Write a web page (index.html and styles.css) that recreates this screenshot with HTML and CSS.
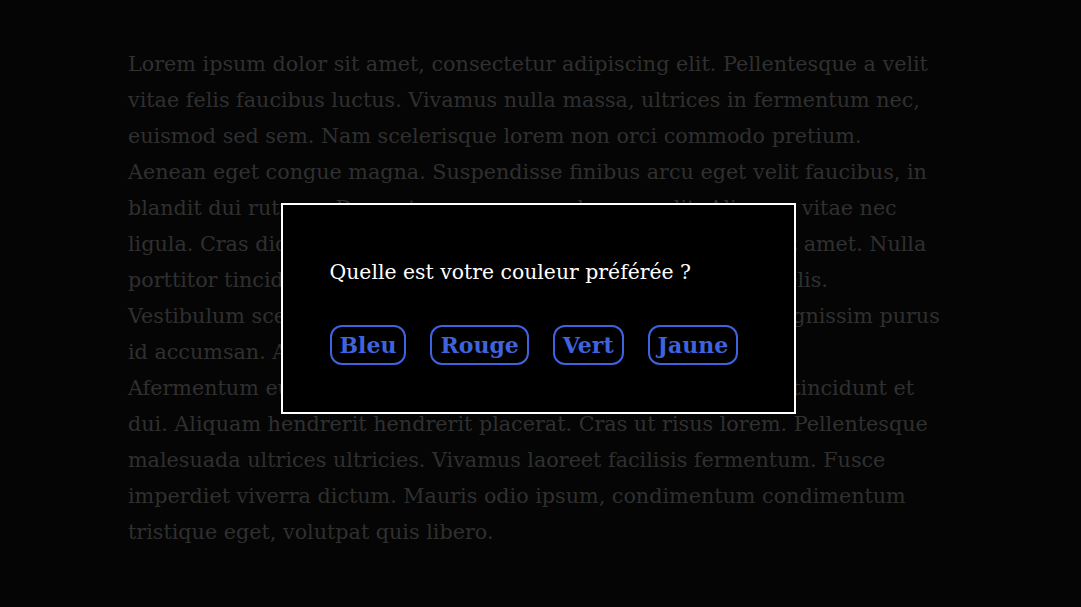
FILE: index.html
```html
<!DOCTYPE html>
<html lang="fr">
<head>
    <meta charset="UTF-8">
    <meta name="viewport" content="width=device-width, initial-scale=1.0">
    <title>Couleur préférée</title>
    <link rel="stylesheet" href="styles.css">
</head>
<body>
    <main class="page">
        <p class="text">
            Lorem ipsum dolor sit amet, consectetur adipiscing elit. Pellentesque a velit<br>
            vitae felis faucibus luctus. Vivamus nulla massa, ultrices in fermentum nec,<br>
            euismod sed sem. Nam scelerisque lorem non orci commodo pretium.<br>
            Aenean eget congue magna. Suspendisse finibus arcu eget velit faucibus, in<br>
            blandit dui rutrum. Donec tempus sem, sed augue elit. Aliquam vitae nec<br>
            ligula. Cras dictum, mauris eu lacinia aliquet, quam et ligula sit amet. Nulla<br>
            porttitor tincidunt lectus, non pellentesque massa et aliquam felis.<br>
            Vestibulum scelerisque metus nec lacus ullamcorper, ut eget dignissim purus<br>
            id accumsan. Aliquam erat volutpat, sed ornare lacus.<br>
            Afermentum eu. Sed nisi lorem sed tortor ullamcorper aliquet, tincidunt et<br>
            dui. Aliquam hendrerit hendrerit placerat. Cras ut risus lorem. Pellentesque<br>
            malesuada ultrices ultricies. Vivamus laoreet facilisis fermentum. Fusce<br>
            imperdiet viverra dictum. Mauris odio ipsum, condimentum condimentum<br>
            tristique eget, volutpat quis libero.
        </p>
    </main>

    <div class="overlay">
        <div class="dialog" role="dialog" aria-labelledby="question">
            <p class="question" id="question">Quelle est votre couleur préférée ?</p>
            <div class="choices">
                <button class="choice">Bleu</button>
                <button class="choice">Rouge</button>
                <button class="choice">Vert</button>
                <button class="choice">Jaune</button>
            </div>
        </div>
    </div>
</body>
</html>
```

FILE: styles.css
```css
* {
    margin: 0;
    padding: 0;
    box-sizing: border-box;
}

body {
    background: #050505;
    font-family: 'DejaVu Serif', Georgia, serif;
    min-height: 100vh;
}

.page {
    width: 825px;
    margin: 0 auto;
    padding-top: 46px;
}

.text {
    color: #303030;
    font-size: 20.7px;
    line-height: 36px;
    white-space: nowrap;
}

.overlay {
    position: fixed;
    inset: 0;
    display: flex;
    justify-content: center;
    align-items: center;
    padding: 9px 5px 0 0;
}

.dialog {
    width: 515px;
    height: 211px;
    background: #000;
    border: 2px solid #fff;
    padding: 49px 47px 0;
}

.question {
    color: #fff;
    font-size: 20.4px;
    line-height: 36px;
    margin-bottom: 35px;
}

.choices {
    display: flex;
    gap: 24px;
}

.choice {
    background: transparent;
    color: #3f63dc;
    border: 2px solid #3f63dc;
    border-radius: 12px;
    font-family: 'DejaVu Serif', Georgia, serif;
    font-weight: bold;
    font-size: 22px;
    line-height: 26px;
    padding: 5px 8px;
    cursor: pointer;
}
```
